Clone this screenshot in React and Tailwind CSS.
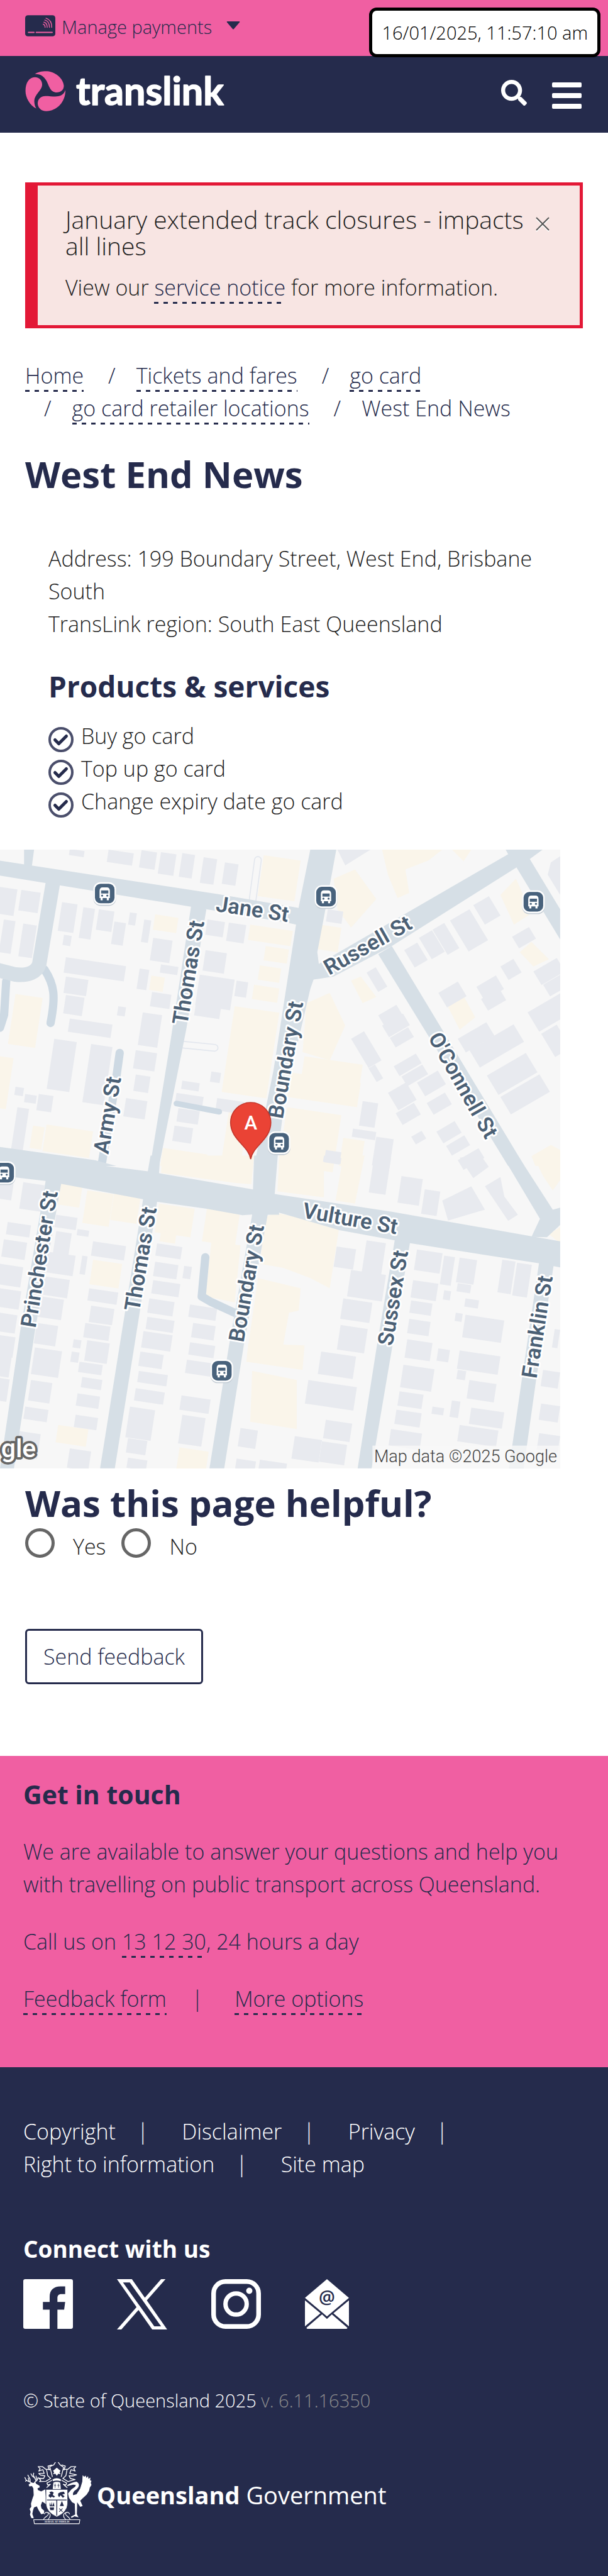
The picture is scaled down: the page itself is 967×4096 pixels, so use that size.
import React from "react";
import { FaSearch } from "react-icons/fa";

const dash =
  "inline-block bg-[repeating-linear-gradient(to_right,#252b4c_0px,#252b4c_7px,transparent_7px,transparent_15px)] bg-[length:100%_3px] bg-bottom bg-no-repeat";

function DashLink({ children }) {
  return (
    <a href="#" className={dash + " leading-[52px] text-[#252b4c]"}>
      {children}
    </a>
  );
}

/* ---------- map data ---------- */

const NORTH_GREY = [[0,200,45,130],[55,215,50,100],[10,360,30,160],[60,380,35,160],[160,275,40,140],[215,300,30,150],[255,310,40,100],[295,370,30,110],[335,325,18,60],[372,360,18,110],[395,450,50,110],[165,435,20,50],[170,545,155,75],[170,640,58,80],[170,730,48,90],[180,845,110,65],[305,785,20,45],[140,945,58,245],[235,970,55,285],[360,600,25,100],[415,580,45,40],[392,715,50,70],[368,815,50,160],[350,1000,55,90],[350,1120,38,80],[325,1235,55,90],[535,360,45,75],[590,375,45,90],[530,510,55,100],[515,630,90,150],[610,660,30,75],[505,770,65,60],[365,20,40,85],[415,30,40,105],[470,35,33,115],[525,55,35,125],[580,80,35,105],[280,18,65,60],[180,14,38,30],[470,1150,45,40],[455,1210,70,60],[560,1235,70,60],[545,1105,25,50],[460,1285,55,65],[450,1370,48,75],[45,1280,30,220],[100,1215,38,80],[40,1180,22,40],[65,1215,30,40],[845,310,40,60],[935,1250,40,120],[910,1385,60,40],[970,1425,45,140],[840,1490,40,60]];
const NORTH_SAND = [[680,45,95,200],[645,385,110,75],[685,490,60,70],[670,585,55,70],[655,680,65,70],[605,785,115,420],[825,385,55,120],[400,335,60,75],[390,635,35,70],[40,725,70,245],[0,1030,35,250],[120,1365,120,130],[85,1370,30,110],[590,1300,50,260],[750,1110,180,120],[740,1280,140,280],[785,1030,150,170],[420,1480,115,88],[885,1430,55,138]];
const NORTH_DIAGONAL = [[1042,510,50,90],[1080,450,50,110],[1115,410,45,130],[1160,365,75,160],[1220,290,60,100],[1320,445,65,60],[1290,590,50,70],[1375,615,90,70],[1400,680,80,60],[1130,720,75,75],[1228,690,75,70],[1240,750,70,60],[975,830,70,60],[985,880,80,60],[1005,940,70,50],[1180,945,110,70],[1210,1000,170,90],[1255,1125,150,100],[1290,1230,150,90],[1360,815,130,100],[1395,920,60,120],[905,945,50,150],[950,1090,25,70],[1015,1080,85,50],[1035,1130,80,50],[1075,1160,80,70],[1000,1210,70,90],[1020,1310,70,60],[1100,1260,70,60],[1125,1400,70,60],[1150,1470,70,50],[1060,1425,40,40],[1180,1540,80,50],[945,620,35,100]];
const NORTH_SAND_SHAPES = ["860,160 915,115 970,260 905,400 870,310","985,18 1140,18 1105,70 1045,115 1055,230 1025,255 1000,140","1165,18 1215,18 1195,75","790,770 850,720 890,880 850,1050 780,1010","1290,240 1330,160 1370,330 1325,385","1340,520 1370,470 1415,555 1375,590","905,660 930,640 970,740 935,770","1150,770 1195,735 1225,840 1185,900","1370,1520 1420,1465 1444,1490 1444,1568 1380,1568"];
const SOUTH_GREY = [[60,130,55,130],[0,130,35,80],[20,325,60,60],[10,410,60,85],[0,530,60,100],[0,650,55,90],[0,770,45,90],[0,880,40,100],[0,980,30,100],[0,1090,25,110],[145,290,55,60],[145,370,40,120],[200,360,30,30],[120,470,75,100],[110,590,70,90],[105,690,60,100],[95,820,55,100],[90,940,70,130],[80,1100,55,100],[65,1230,60,60],[50,1350,55,120],[180,1435,55,95],[212,490,14,90],[240,420,85,70],[230,650,75,60],[235,735,60,80],[220,820,65,70],[190,900,20,40],[225,905,58,100],[185,960,20,50],[205,1010,60,50],[212,1085,52,50],[200,1165,58,60],[195,1270,58,60],[405,430,65,60],[400,520,60,70],[475,540,20,60],[395,610,70,65],[385,700,65,70],[380,790,70,60],[370,860,75,80],[362,960,60,70],[358,1055,75,55],[350,1140,75,60],[335,1230,65,150],[330,1385,50,70],[330,1480,50,50],[490,730,70,60],[498,820,58,70],[490,915,65,60],[482,1000,65,65],[468,1175,75,70],[470,1270,60,140],[868,445,50,100],[945,415,50,160],[905,560,90,130],[885,700,75,100],[878,830,70,120],[828,960,90,110],[795,1100,125,115],[840,1295,68,90],[760,1375,70,110],[830,1400,65,100],[620,1335,45,90],[610,1485,50,48],[670,1490,70,45],[1075,460,66,100],[1145,490,28,140],[1185,500,45,120],[1295,510,34,160],[1333,525,38,160],[1065,610,65,85],[1145,660,18,45],[1180,625,35,40],[1060,710,55,60],[1055,800,55,70],[1200,700,35,40],[1175,770,18,40],[1200,780,100,110],[1050,900,65,90],[1130,945,30,60],[1185,955,105,90],[1040,1025,80,110],[1210,1100,70,90],[1030,1155,62,70],[1022,1245,65,70],[1008,1340,80,80],[1215,1235,85,80],[1185,1320,100,80],[1165,1200,22,80],[1115,1230,30,35],[1180,1050,22,45],[1400,1050,44,80],[1395,1215,49,80],[1390,1360,54,80],[1430,850,14,90],[965,0,43,180],[1035,100,55,130],[1095,165,40,120],[835,0,45,30]];
const SOUTH_SAND = [[158,130,55,110],[225,170,68,160],[295,175,68,140],[410,235,92,140],[535,240,85,180],[240,510,75,120],[150,1320,78,85],[463,1430,75,105],[415,370,40,50]];
const SOUTH_SAND_SHAPES = ["418,0 655,0 648,140 610,135 415,85","720,0 835,0 835,205 715,175","885,0 940,0 915,235 865,220","685,300 710,280 875,345 850,650 800,600 730,550 670,530","665,600 775,650 770,760 745,770 730,930 640,930","640,920 785,930 780,1050 635,1010","650,1055 765,1100 765,1340 645,1305","545,420 620,440 605,720 530,690","1375,0 1444,0 1444,120 1425,170 1400,100","1415,385 1444,350 1444,430"];
const SOUTH_GREY_SHAPES = ["1140,220 1215,150 1250,265 1155,318","1250,150 1290,105 1300,200 1335,290 1310,320","1185,10 1240,0 1260,55 1220,110"];
const NORTH_ROADS = ["0,72 560,235 790,310 775,390 740,375 495,298 0,145","800,16 867,16 835,350 818,520 822,580 800,700 735,1230 712,1568 655,1568 705,1100 770,300","62,16 88,16 82,100 62,94","493,290 532,310 480,900 410,1568 387,1568 440,950","815,585 1310,40 1303,16 1400,16 1365,65 1010,490 860,640 803,656","1330,100 1365,62 1444,310 1444,458","975,530 1010,490 1352,1568 1310,1568","0,1475 245,1540 300,1568 0,1568"];
const SOUTH_ROADS = ["0,-15 60,0 385,78 650,165 715,190 1010,275 1370,395 1444,420 1444,548 1390,528 1060,430 875,365 720,280 625,292 530,260 400,225 120,125 0,98","655,0 716,0 708,190 720,290 690,290 628,935 578,1533 540,1533 590,935 650,290","118,120 158,135 90,860 36,1533 0,1533 52,860","388,0 413,0 405,225 360,770 296,1533 258,1533 322,770 370,200","1018,410 1057,425 1010,950 958,1533 922,1533 970,950","1390,520 1427,540 1382,1100 1350,1533 1312,1533 1345,1100","1295,0 1335,0 1425,265 1444,255 1444,340 1410,400 1370,398 1392,310"];
const STREETS = [["Jane St",417,119,8.5],["Thomas St",363,341,-80.7],["Boundary St",548,523,-80],["Army St",210,591,-80.5],["Russell St",638,244,-29.5],["O'Connell St",829,364,60.5],["Vulture St",585,713,10],["Princhester St",69,928,-80.8],["Thomas St",270,896,-80.5],["Boundary St",472,956,-80],["Sussex St",761,963,-80.7],["Franklin St",1040,1026,-81]];
const STOPS = [[203,85],[632,91],[1034,101],[541,568],[8,626],[430,1010]];

const block = ([x, y, w, h]) => {
  const d = w * 0.28;
  const s = h * 0.08;
  return `${x},${y} ${x + w},${y + d} ${x + w - s},${y + d + h} ${x - s},${y + h}`;
};
const slanted = ([x, y, a, b]) => {
  const [ax, ay, bx, by] = [a * 0.67, a * -0.74, b * 0.3, b * 0.95];
  return `${x},${y} ${x + ax},${y + ay} ${x + ax + bx},${y + ay + by} ${x + bx},${y + by}`;
};
const polys = (list) => list.map((p, i) => <polygon key={i} points={p} />);

function StreetMap() {
  return (
    <svg viewBox="0 0 1086 1199" className="block w-full" role="img" aria-label="Map of West End News">
      <rect width="1086" height="1199" fill="#f7f7f7" />
      <g transform="translate(0 -7) scale(.752 .3954)">
        <g fill="#faf5ea">{polys(NORTH_SAND.map(block))}{polys(NORTH_SAND_SHAPES)}</g>
        <g fill="#e8eaef">
          {polys(NORTH_GREY.map(block))}
          {polys(NORTH_DIAGONAL.map(slanted))}
          <polygon points="870,18 955,18 890,95" />
          <polygon points="1444,50 1420,80 1412,140 1444,240" />
        </g>
      </g>
      <g transform="translate(0 593) scale(.752 .3954)">
        <g fill="#faf5ea">{polys(SOUTH_SAND.map(block))}{polys(SOUTH_SAND_SHAPES)}</g>
        <g fill="#e8eaef">{polys(SOUTH_GREY.map(block))}{polys(SOUTH_GREY_SHAPES)}</g>
      </g>
      <g fill="none" stroke="#cdd9e3" strokeWidth="16" strokeLinecap="round">
        <path d="M86 232C106 262 108 285 98 336" />
        <path d="M12 255L8 320L0 345" />
        <path d="M232 394L224 452L198 605" />
        <path d="M398 790L391 866L408 876L460 900" strokeLinejoin="round" />
        <path d="M342 492L425 508" strokeWidth="11" />
      </g>
      <g fill="none" strokeLinecap="round">
        <path d="M500 20L488 110M355 378L416 384" stroke="#e3e7ee" strokeWidth="15" />
        <path d="M500 20L488 110M355 378L416 384" stroke="#f7f7f7" strokeWidth="11" />
        <path d="M103 62L76 222Q68 246 30 242L-10 232" stroke="#d6dfe6" strokeWidth="28" />
      </g>
      <g fill="#d6dfe6">
        <g transform="translate(0 -7) scale(.752 .3954)">{polys(NORTH_ROADS)}</g>
        <g transform="translate(0 593) scale(.752 .3954)">{polys(SOUTH_ROADS)}</g>
      </g>
      <g fontFamily="Roboto, sans-serif" fontWeight="600" fontSize="42" fill="#4b6075" stroke="#fff" strokeWidth="7" strokeLinejoin="round" paintOrder="stroke">
        {STREETS.map(([name, x, y, angle], i) => (
          <text key={i} transform={`translate(${x} ${y}) rotate(${angle})`}>{name}</text>
        ))}
      </g>
      {STOPS.map(([x, y], i) => (
        <g key={i} transform={`translate(${x} ${y})`}>
          <rect x="-22" y="-20" width="44" height="44" rx="14" fill="#c3ccd4" />
          <rect x="-22" y="-22" width="44" height="44" rx="14" fill="#fff" />
          <rect x="-19" y="-19" width="38" height="38" rx="11" fill="#48627c" />
          <path d="M-10 -5Q-10 -12 -4 -12H4Q10 -12 10 -5V9H8V13H4V9H-4V13H-8V9H-10Z" fill="#fff" />
          <path d="M-7 -6H7V0H-7Z" fill="#48627c" />
          <circle cx="-5" cy="4" r="2" fill="#48627c" />
          <circle cx="5" cy="4" r="2" fill="#48627c" />
        </g>
      ))}
      <path d="M486 600C483 575 447 562 447 529A39 39 0 1 1 525 529C525 562 489 575 486 600Z" fill="#ea4335" stroke="#c5372c" strokeWidth="2" />
      <text x="486" y="542" textAnchor="middle" fontFamily="Roboto, sans-serif" fontWeight="500" fontSize="38" fill="#fff">A</text>
      <rect x="722" y="1155" width="364" height="44" fill="#f7f7f7" fillOpacity=".8" />
      <text x="1080" y="1187" textAnchor="end" fontFamily="Roboto, sans-serif" fontSize="33" fill="#444">Map data ©2025 Google</text>
      <text x="2" y="1178" fontFamily="Roboto, sans-serif" fontWeight="500" fontSize="50" fill="#fff" stroke="#666" strokeWidth="9" strokeLinejoin="round" paintOrder="stroke">gle</text>
    </svg>
  );
}

/* ---------- logos and icons ---------- */

function TranslinkLogo() {
  return (
    <svg viewBox="0 0 340 64" className="h-16 w-[340px]" role="img" aria-label="translink">
      <g fill="#f05fa2" transform="scale(.2735) translate(-22 -50)">
        <path d="M78 68C95 55 125 50 150 51C205 55 245 100 247 135C247 160 230 175 200 174C165 170 160 130 145 105C130 80 110 66 78 68Z" />
        <path d="M24 165C24 120 45 86 78 86C105 87 121 105 121 130C118 165 75 185 75 225C76 245 80 258 87 268C50 250 24 205 24 165Z" />
        <path d="M256 160C258 230 205 283 145 283C115 283 95 262 95 237C96 210 115 196 140 195C175 195 205 203 230 192C245 185 252 172 256 160Z" />
      </g>
      <text x="81" y="54" fontFamily="Lato, sans-serif" fontWeight="700" fontSize="61" fill="#fff" stroke="#fff" strokeWidth="1.5" strokeLinejoin="round">translink</text>
    </svg>
  );
}

function CardIcon() {
  return (
    <svg viewBox="0 0 174 122" className="h-[34px] w-12">
      <rect width="174" height="122" rx="16" fill="#252b4c" />
      <g fill="none" stroke="#f05fa2" strokeWidth="5" strokeLinecap="round">
        <path d="M104 52Q115 55 115 70M108 40Q127 44 127 70M113 28Q140 34 140 70M120 17Q155 28 153 70" />
        <path d="M19 99H51M64 99H156" strokeWidth="7" />
      </g>
    </svg>
  );
}

function TickIcon() {
  return (
    <svg viewBox="0 0 40 40" className="size-10 shrink-0" fill="none">
      <circle cx="20" cy="20" r="18" stroke="#4a4e6b" strokeWidth="4" />
      <path d="M10.500 20.500L16.500 26.500L28.500 14.500" stroke="#252b4c" strokeWidth="5" strokeLinecap="round" strokeLinejoin="round" />
    </svg>
  );
}

function Crest() {
  return (
    <svg viewBox="24 42 396 370" className="h-[100px] w-[107px]" fill="#fff">
      <path d="M48 178L62 166L80 168L84 158L92 172L112 184L114 194L100 200L104 210L122 218L146 206L150 250L158 262L150 275L152 295L140 285L128 278L120 300L124 318L140 332L138 348L122 352L106 326L96 306L80 312L74 330L70 350L76 368L78 376L64 374L56 354L60 338L54 320L64 308L62 290L70 262L78 240L76 200L68 186L52 188Z" />
      <path d="M66 168L50 160L34 152L26 136M50 160L46 140M36 152L30 158M58 164L56 144L48 130L44 122M84 164L98 152L104 136M92 158L84 138L76 124L78 110M86 140L70 128L62 114M96 152L92 128" fill="none" stroke="#fff" strokeWidth="5" strokeLinecap="round" />
      <path d="M276 180Q300 164 330 160Q346 168 344 184Q340 200 318 214Q306 226 310 240L330 234L352 200L364 160L366 122L376 132L384 124L388 138L398 128L400 144L412 136L410 152L418 156L414 168L418 180L408 196L404 214L390 236L366 258L352 272L366 304L352 308L334 282L332 352L342 370L318 364L300 374L298 366L322 354L320 290L304 282L286 256L280 230L300 206L322 190L326 180L310 178L276 186Z" />
      <path d="M150 206H278V290Q276 340 214 368Q152 340 150 290Z" stroke="#252b4c" strokeWidth="3" />
      <path d="M156 268H272M214 268V360" stroke="#252b4c" strokeWidth="5" />
      <path d="M166 246Q166 232 178 234L170 222L184 218L196 224L190 238L204 248L196 254L184 248L178 256ZM222 230Q236 218 256 220L262 232L246 236L260 246L250 256L236 240L228 252L222 244ZM172 282L180 304L184 278L188 304L196 282L200 306H172ZM172 312H198L196 328H176ZM232 304L244 274L256 304Z" fill="#252b4c" />
      <path d="M228 318L248 338M248 318L228 338" stroke="#252b4c" strokeWidth="4" />
      <path d="M190 204L194 166Q214 156 234 166L238 204ZM188 148Q214 132 240 148L236 158Q214 150 192 158Z" />
      <path d="M204 172V196M198 182H210M224 172V196M218 182H230" stroke="#252b4c" strokeWidth="3" />
      <path d="M192 96L200 90L214 78L228 90L236 96L230 106L236 116L222 114L214 126L206 114L192 116L198 106Z" />
      <g fill="none" stroke="#fff" strokeWidth="5" strokeLinejoin="round">
        <path d="M222 46L234 62L254 76L248 100L240 132M206 46L196 62L172 72L180 100L188 132M186 62L162 68L170 94M242 62L264 68L256 94" />
        <path d="M176 88L150 88L130 72L104 72L116 84L108 98L132 90L140 112L108 112L118 122L144 126L136 142L108 140L120 152L112 160L150 158L180 140" />
        <path d="M252 88L278 88L298 72L326 72L314 84L322 98L298 90L290 112L330 120L312 126L286 126L294 142L322 148L280 160L248 140" />
        <path d="M154 90L160 124L178 142M274 90L268 124L250 142M186 152L156 168L160 180L176 176L154 196M242 152L272 168L268 180L252 176L276 196" />
        <path d="M140 352Q146 336 160 342Q172 350 154 364Q138 376 136 382M154 340Q186 346 170 374L162 382M290 352Q284 336 270 342Q258 350 276 364Q290 376 292 382M276 340Q244 346 258 374L266 382" strokeWidth="4" />
        <path d="M78 384H350L346 408H82Z" strokeWidth="4" />
      </g>
      <text x="214" y="401" textAnchor="middle" fontFamily="Liberation Serif, serif" fontWeight="700" fontSize="16" fill="#fff">AUDAX AT FIDELIS</text>
    </svg>
  );
}

const iconLink = "block text-white";

/* ---------- page ---------- */

export default function App() {
  return (
    <div className="relative bg-white font-['Open_Sans',sans-serif] text-[34px] font-light leading-[52px] text-[#1f1f1f]">
      <div className="flex h-[89px] items-start bg-[#f05fa2] px-10 pt-6 text-[#252b4c]">
        <button type="button" className="flex items-start text-[29px] leading-[38px]">
          <CardIcon />
          <span className="ml-[10px]">Manage payments</span>
          <svg viewBox="0 0 22 13" className="ml-[23px] mt-[10px] h-[13px] w-[22px]" fill="#252b4c">
            <path d="M1.500 0H20.500Q22 0 21 1.500L12 12Q11 13 10 12L1 1.500Q0 0 1.500 0Z" />
          </svg>
        </button>
        <div className="absolute right-3 top-3 flex h-[79px] items-center rounded-xl border-[5px] border-black bg-white px-[15px] text-[29px] leading-10 text-black">
          16/01/2025, 11:57:10 am
        </div>
      </div>

      <header className="flex h-[122px] items-start justify-between bg-[#252b4c] pl-10 pr-[42px] pt-6">
        <a href="#"><TranslinkLogo /></a>
        <div className="flex items-start gap-10 text-white">
          <button type="button" aria-label="Search" className="mt-[14px]">
            <FaSearch className="size-[41px]" />
          </button>
          <button type="button" aria-label="Menu" className="mt-[18px] flex w-[47px] flex-col gap-[9px]">
            <span className="h-[8px] w-full rounded-xs bg-white" />
            <span className="h-[8px] w-full rounded-xs bg-white" />
            <span className="h-[8px] w-full rounded-xs bg-white" />
          </button>
        </div>
      </header>

      <main>
        <div className="px-10 pt-[79px]">
          <section className="border-[5px] border-l-[20px] border-[#e31836] bg-[#f8e5e3] pb-[34px] pl-11 pr-12 pt-[33px]">
            <div className="flex items-start">
              <h2 className="flex-1 text-[39px] leading-[42px]">January extended track closures - impacts all lines</h2>
              <button type="button" aria-label="Close" className="mt-[17px]">
                <svg viewBox="0 0 22 24" className="h-6 w-[22px]" fill="none" strokeWidth="2">
                  <path d="M1 3L21 23M21 3L1 23" stroke="#fff" />
                  <path d="M1 1L21 21M21 1L1 21" stroke="#555" />
                </svg>
              </button>
            </div>
            <p className="mt-[19px]">
              View our <DashLink>service notice</DashLink> for more information.
            </p>
          </section>

          <nav aria-label="Breadcrumb" className="mt-[49px] text-[#252b4c]">
            <ol className="flex flex-wrap gap-x-[9px]">
              <li><DashLink>Home</DashLink></li>
              {["Tickets and fares", "go card", "go card retailer locations"].map((item) => (
                <li key={item} className="flex gap-[33px] pl-[30px]">
                  <span>/</span>
                  <DashLink>{item}</DashLink>
                </li>
              ))}
              <li className="flex gap-[33px] pl-[30px]">
                <span>/</span>
                <span>West End News</span>
              </li>
            </ol>
          </nav>

          <h1 className="mt-[46px] text-[58px] font-bold leading-[66px] text-[#252b4c]">West End News</h1>

          <div className="px-[37px] pt-[75px]">
            <p>Address: 199 Boundary Street, West End, Brisbane South</p>
            <p>TransLink region: South East Queensland</p>
            <h2 className="mt-[45px] text-[46px] font-bold leading-[56px] text-[#252b4c]">Products &amp; services</h2>
            <ul className="mt-[25px]">
              {["Buy go card", "Top up go card", "Change expiry date go card"].map((item) => (
                <li key={item} className="flex items-end gap-3">
                  <TickIcon />
                  <span>{item}</span>
                </li>
              ))}
            </ul>
          </div>
        </div>

        <div className="mt-[51px] pr-[76px]">
          <StreetMap />
        </div>

        <form className="px-10 pt-[22px]" onSubmit={(e) => e.preventDefault()}>
          <fieldset>
            <legend className="text-[58px] font-bold leading-[66px] text-[#252b4c]">Was this page helpful?</legend>
            <div className="mt-[7px] flex items-start">
              <input id="yes" name="helpful" type="radio" className="size-[47px] appearance-none rounded-full border-[5px] border-[#666] bg-white checked:bg-[#252b4c]" />
              <label htmlFor="yes" className="ml-[29px] mt-[3px]">Yes</label>
              <input id="no" name="helpful" type="radio" className="ml-[25px] size-[47px] appearance-none rounded-full border-[5px] border-[#666] bg-white checked:bg-[#252b4c]" />
              <label htmlFor="no" className="ml-[29px] mt-[3px]">No</label>
            </div>
          </fieldset>
          <button type="submit" className="mt-[105px] block h-[88px] rounded-md border-[3px] border-[#252b4c] bg-white px-[26px] text-[#252b4c]">
            Send feedback
          </button>
        </form>
      </main>

      <footer className="mt-[114px]">
        <section className="bg-[#f05fa2] px-[37px] pb-[83px] pt-[36px] text-[#252b4c]">
          <h2 className="text-[41px] font-bold leading-[50px]">Get in touch</h2>
          <p className="mt-10">
            We are available to answer your questions and help you with travelling on public transport across Queensland.
          </p>
          <p className="mt-[39px]">
            Call us on <DashLink>13 12 30</DashLink>, 24 hours a day
          </p>
          <div className="mt-[39px] flex">
            <DashLink>Feedback form</DashLink>
            <span className="ml-10 mr-[50px]">|</span>
            <DashLink>More options</DashLink>
          </div>
        </section>

        <section className="bg-[#252b4c] px-[37px] pb-[82px] pt-[76px] text-white">
          <ul className="flex flex-wrap">
            {["Copyright", "Disclaimer", "Privacy", "Right to information"].map((item) => (
              <li key={item} className="mr-[53px] flex gap-[34px]">
                <a href="#">{item}</a>
                <span>|</span>
              </li>
            ))}
            <li><a href="#">Site map</a></li>
          </ul>

          <h2 className="mt-[87px] text-[37px] font-bold leading-[44px]">Connect with us</h2>
          <div className="mt-[26px] flex gap-[70px]">
            <a href="#" aria-label="Facebook" className={iconLink}>
              <svg viewBox="0 0 96 96" className="size-[79px]" fill="currentColor">
                <path fillRule="evenodd" d="M4 0H92Q96 0 96 4V92Q96 96 92 96H4Q0 96 0 92V4Q0 0 4 0ZM51 96V59H38V44H51V34C51 21 59 14 72 14H81V29H74C68 29 66 32 66 37V44H81L79 59H66V96Z" />
              </svg>
            </a>
            <a href="#" aria-label="X" className={iconLink}>
              <svg viewBox="0 0 24 24" className="size-[80px]" fill="currentColor">
                <path d="M14.258 10.152L23.176 0h-2.113l-7.747 8.813L7.133 0H0l9.352 13.328L0 23.973h2.113l8.176-9.309 6.531 9.309h7.133zm-2.895 3.293l-.949-1.328L2.875 1.56h3.246l6.086 8.523.945 1.328 7.91 11.078h-3.246zm0 0" />
              </svg>
            </a>
            <a href="#" aria-label="Instagram" className={iconLink}>
              <svg viewBox="0 0 96 96" className="size-[79px]" fill="none" stroke="currentColor">
                <rect x="4.500" y="4.500" width="87" height="87" rx="23" strokeWidth="9" />
                <circle cx="48" cy="48" r="20.500" strokeWidth="8.500" />
                <circle cx="73.500" cy="22.500" r="6" fill="currentColor" stroke="none" />
              </svg>
            </a>
            <a href="#" aria-label="Email" className={iconLink}>
              <svg viewBox="0 0 85 96" className="h-[79px] w-[70px]" fill="currentColor">
                <path d="M42.500 0L85 36L42.500 72L0 36ZM0 41L30 66L0 91ZM85 41L55 66L85 91ZM33 68L42.500 77L52 68L82 94Q82 96 80 96H5Q3 96 3 94Z" />
                <text x="42.500" y="47" textAnchor="middle" fontFamily="Open Sans, sans-serif" fontWeight="600" fontSize="35" fill="#252b4c">@</text>
              </svg>
            </a>
          </div>

          <p className="mt-[93px] text-[29px] leading-10">
            © State of Queensland 2025 <span className="text-[#8c8c8c]">v. 6.11.16350</span>
          </p>
          <a href="#" className="ml-[2px] mt-[77px] flex items-center gap-2">
            <Crest />
            <span className="pt-[6px] text-[38px] font-normal leading-[44px]">
              <strong className="font-bold">Queensland</strong> Government
            </span>
          </a>
        </section>
      </footer>
    </div>
  );
}
